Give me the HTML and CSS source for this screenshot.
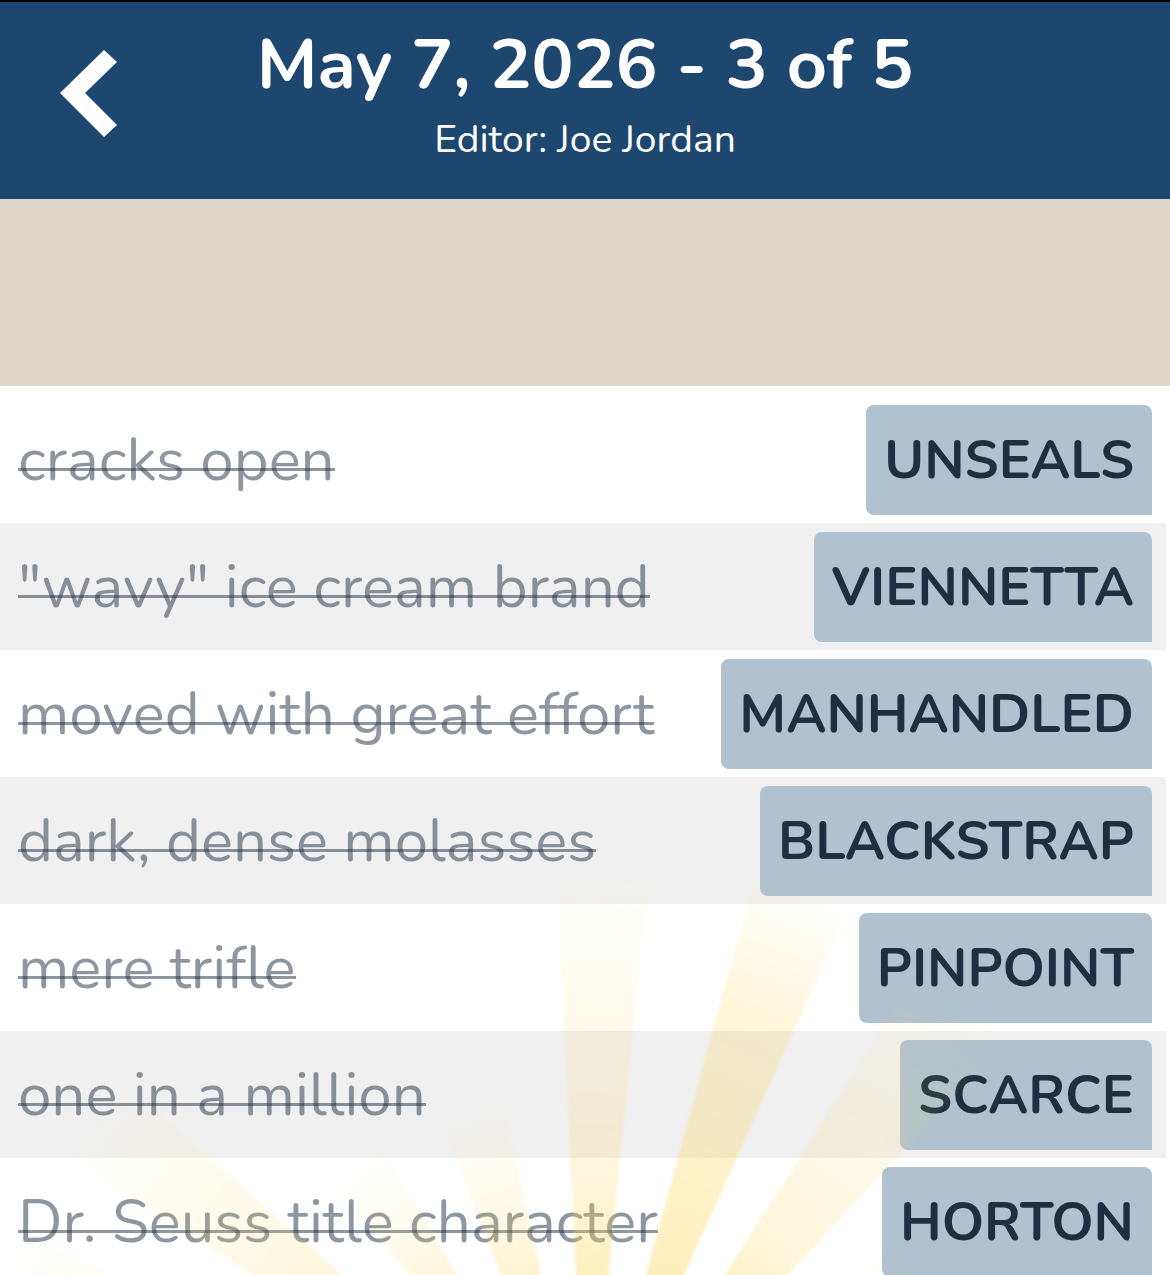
FILE: index.html
```html
<!DOCTYPE html>
<html lang="en">
<head>
    <meta charset="UTF-8">
    <meta name="viewport" content="width=device-width, initial-scale=1.0">
    <title>May 7, 2026 - 3 of 5</title>
    <link rel="stylesheet" href="styles.css">
</head>
<body>
    <header class="top-bar">
        <button type="button" class="back-button" aria-label="Back">
            <svg width="58" height="88" viewBox="0 0 58 88" aria-hidden="true">
                <path d="M44 0 L57 12 L25 43 L57 75 L44 87 L0 43 Z" fill="#fff"/>
            </svg>
        </button>
        <div class="heading">
            <h1>May 7, 2026 - 3 of 5</h1>
            <p>Editor: Joe Jordan</p>
        </div>
    </header>

    <div class="answer-area"></div>

    <main class="clues">
        <ul class="clue-list">
            <li class="clue-row"><s>cracks open</s><strong class="answer">UNSEALS</strong></li>
            <li class="clue-row"><s>"wavy" ice cream brand</s><strong class="answer">VIENNETTA</strong></li>
            <li class="clue-row"><s>moved with great effort</s><strong class="answer">MANHANDLED</strong></li>
            <li class="clue-row"><s>dark, dense molasses</s><strong class="answer">BLACKSTRAP</strong></li>
            <li class="clue-row"><s>mere trifle</s><strong class="answer">PINPOINT</strong></li>
            <li class="clue-row"><s>one in a million</s><strong class="answer">SCARCE</strong></li>
            <li class="clue-row"><s>Dr. Seuss title character</s><strong class="answer">HORTON</strong></li>
        </ul>
    </main>

    <!-- sun rays over the bottom of the list -->
    <svg class="sunburst" viewBox="0 0 1170 425" aria-hidden="true">
        <defs>
            <radialGradient id="long" gradientUnits="userSpaceOnUse" cx="587" cy="641" r="640">
                <stop offset="0.3" stop-color="#fbd75c" stop-opacity="0.44"/>
                <stop offset="0.55" stop-color="#fbd75c" stop-opacity="0.32"/>
                <stop offset="0.8" stop-color="#fbd75c" stop-opacity="0.22"/>
                <stop offset="1" stop-color="#fbd75c" stop-opacity="0"/>
            </radialGradient>
            <radialGradient id="mid" gradientUnits="userSpaceOnUse" cx="587" cy="641" r="620">
                <stop offset="0.35" stop-color="#fbd75c" stop-opacity="0.4"/>
                <stop offset="0.5" stop-color="#fbd75c" stop-opacity="0.22"/>
                <stop offset="0.75" stop-color="#fbd75c" stop-opacity="0.12"/>
                <stop offset="1" stop-color="#fbd75c" stop-opacity="0"/>
            </radialGradient>
            <radialGradient id="short" gradientUnits="userSpaceOnUse" cx="587" cy="641" r="400">
                <stop offset="0.5" stop-color="#fbd75c" stop-opacity="0.32"/>
                <stop offset="0.8" stop-color="#fbd75c" stop-opacity="0.1"/>
                <stop offset="1" stop-color="#fbd75c" stop-opacity="0"/>
            </radialGradient>
            <filter id="soft"><feGaussianBlur stdDeviation="1.5"/></filter>
        </defs>
        <g filter="url(#soft)">
            <path d="M587 641 L555 0 L651 0 Z" fill="url(#mid)"/>
            <path d="M587 641 L762 0 L875 0 Z" fill="url(#long)"/>
            <path d="M587 641 L996 0 L1170 14 Z" fill="url(#mid)"/>
            <path d="M587 641 L968 344 L1020 380 Z" fill="url(#short)"/>
            <path d="M587 641 L332 0 L449 0 Z" fill="url(#short)"/>
            <path d="M587 641 L60 0 L203 0 Z" fill="url(#short)"/>
            <path d="M587 641 L0 262 L0 123 Z" fill="url(#mid)"/>
            <path d="M587 641 L0 425 L0 375 Z" fill="url(#mid)"/>
        </g>
    </svg>
</body>
</html>
```
FILE: styles.css
```css
* {
    margin: 0;
    padding: 0;
    box-sizing: border-box;
}

body {
    height: 100vh;
    display: flex;
    flex-direction: column;
    overflow: hidden;
    background: #fff;
    font-family: 'Nunito', 'Lato', sans-serif;
}

.top-bar {
    display: grid;
    grid-template-columns: 180px 1fr 180px;
    flex: none;
    height: 199px;
    border-top: 2px solid #000;
    background: #1e4770;
    color: #fff;
}

.back-button {
    display: flex;
    align-items: flex-start;
    padding: 48px 60px;
    border: none;
    background: none;
    cursor: pointer;
}

.heading {
    padding-top: 18px;
    text-align: center;
}

.heading h1 {
    font-size: 70px;
    font-weight: 700;
    line-height: 90px;
}

.heading p {
    font-size: 39px;
    line-height: 60px;
}

.answer-area {
    flex: none;
    height: 187px;
    background: #dfd8ca;
}

.clues {
    flex: 1;
    min-height: 0;
    padding: 10px 4px 0 0;
    overflow: hidden;
}

.clue-list {
    list-style: none;
}

.clue-row {
    display: flex;
    justify-content: space-between;
    align-items: center;
    height: 127px;
    padding: 0 14px 0 18px;
    color: rgba(30, 47, 65, 0.5);
    font-size: 60px;
}

.clue-row:nth-child(even) {
    background: #f0f0f0;
}

/* strike drawn as a background so it sits low on the letters */
.clue-row s {
    text-decoration: none;
    line-height: 80px;
    background: linear-gradient(rgba(30, 47, 65, 0.5), rgba(30, 47, 65, 0.5)) 0 48px / 100% 3px no-repeat;
}

.answer {
    padding: 0 18px;
    border-radius: 8px 8px 0 8px;
    background: #b0c2cf;
    color: #1e2f41;
    font-size: 54px;
    font-weight: 700;
    line-height: 110px;
}

.sunburst {
    position: fixed;
    left: 0;
    bottom: 0;
    width: 100%;
    pointer-events: none;
}
```
